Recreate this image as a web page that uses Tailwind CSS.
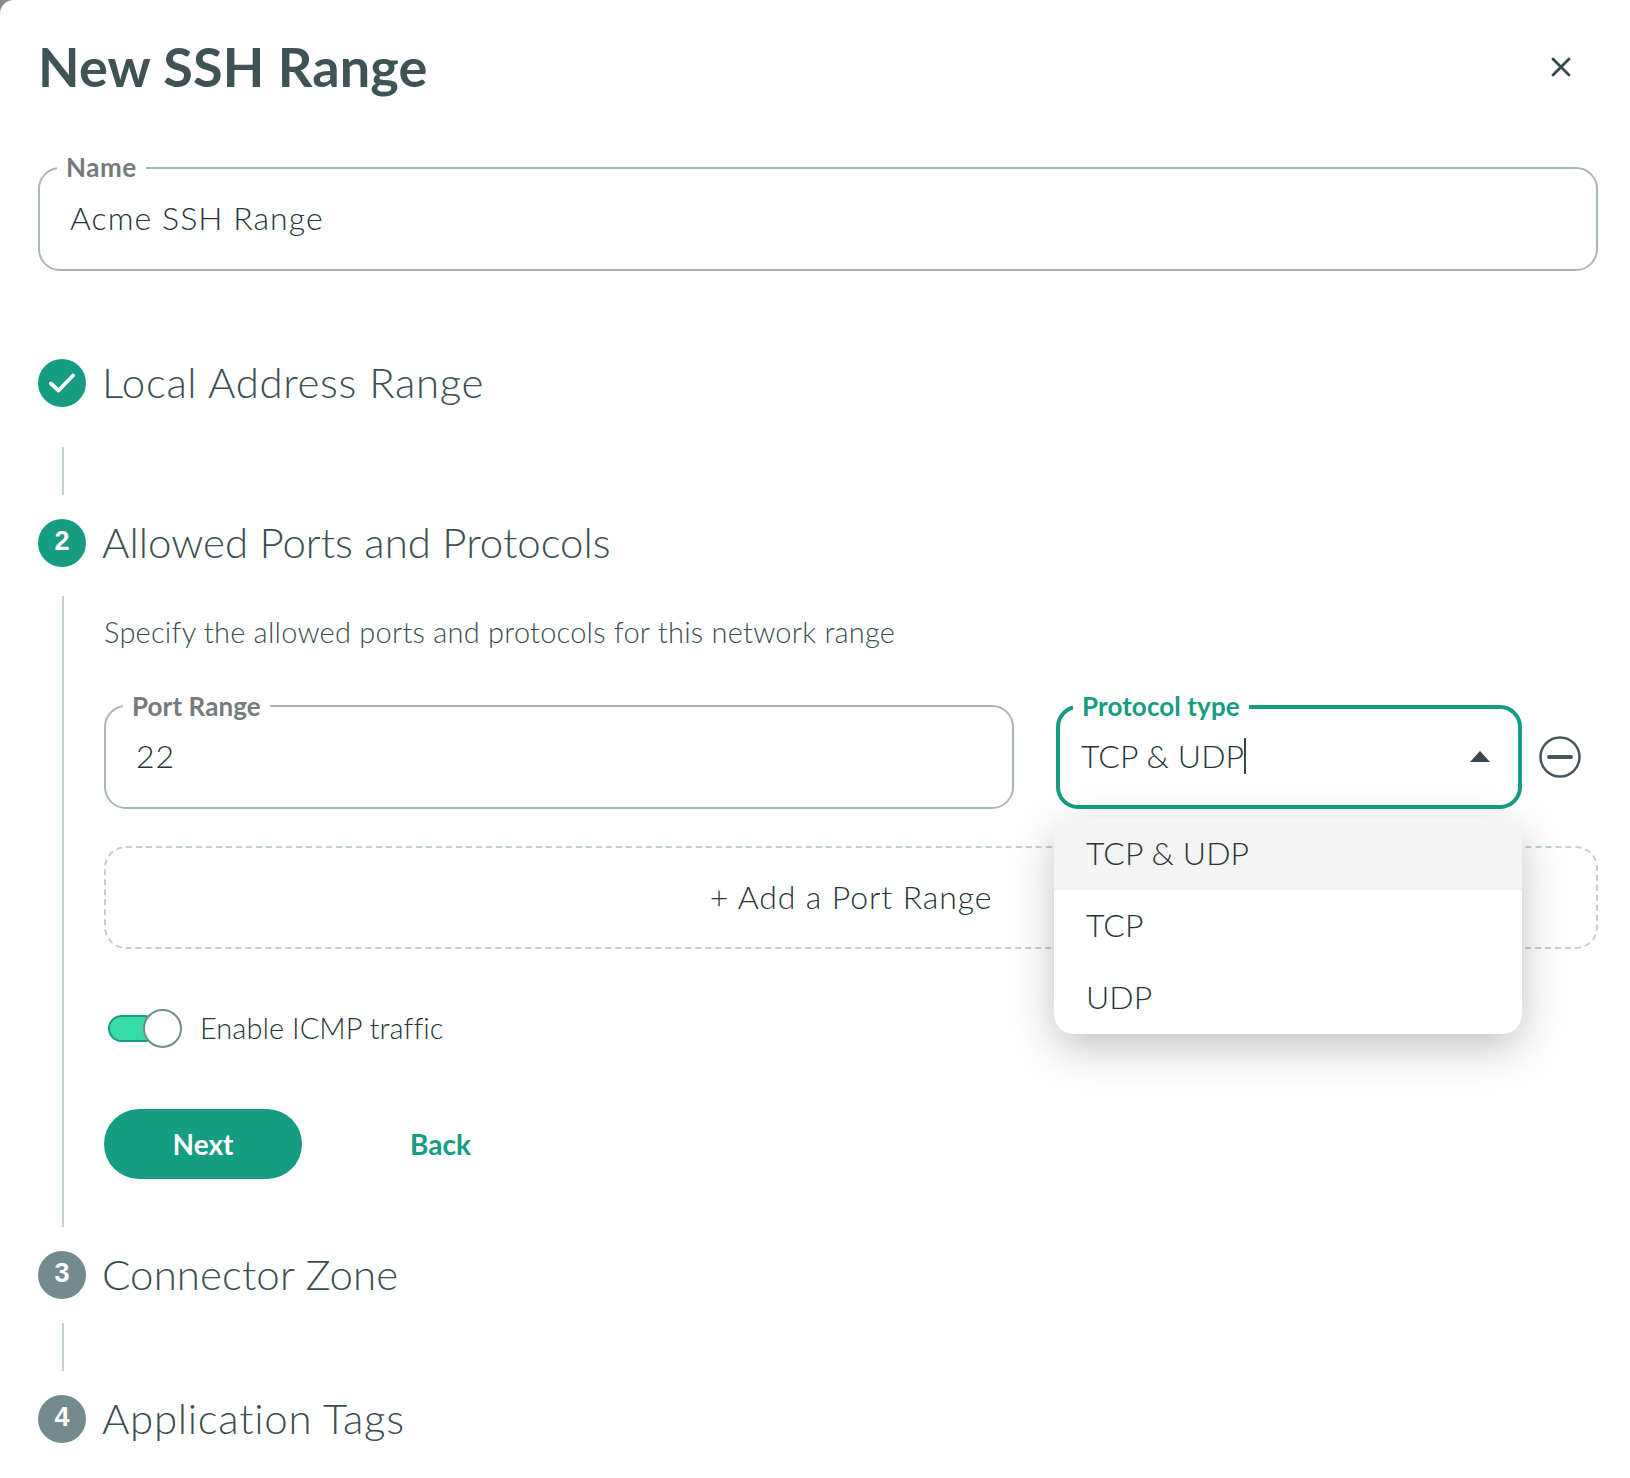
<!DOCTYPE html>
<html lang="en">
<head>
  <meta charset="UTF-8">
  <title>New SSH Range</title>
  <script src="https://cdn.jsdelivr.net/npm/@tailwindcss/browser@4"></script>
</head>
<body class="bg-[#8a8a8a] font-['Lato',sans-serif] text-[#44565a]">
  <div class="w-[1630px] h-[1478px] overflow-hidden bg-white rounded-tl-[14px] pl-[38px] pr-[32px] relative">

    <!-- Header -->
    <div class="flex items-center justify-between h-[133px]">
      <h1 class="text-[54px] font-bold tracking-[0.15px] text-[#3f5256] leading-none">New SSH Range</h1>
      <svg class="mr-[27px]" width="20" height="20" viewBox="0 0 20 20" fill="none" stroke="#37474b" stroke-width="2.8" stroke-linecap="round"><path d="M2 2l16 16M18 2L2 18"/></svg>
    </div>

    <!-- Name -->
    <div class="relative mt-[34px] h-[104px] border-2 border-[#a8b8b9] rounded-[22px] flex items-center pl-[30px]">
      <span class="absolute -top-[17px] left-[17px] bg-white px-[9px] text-[26px] tracking-[0.5px] leading-[30px] font-bold text-[#757a7b]">Name</span>
      <span class="text-[32px] font-light tracking-[1.05px] text-[#263538] pb-[2px]">Acme SSH Range</span>
    </div>

    <!-- Step 1 -->
    <div class="flex items-center gap-[16px] mt-[88px] h-[48px]">
      <div class="w-[48px] h-[48px] rounded-full bg-[#159c82] flex items-center justify-center">
        <svg width="26" height="20" viewBox="0 0 26 20" fill="none" stroke="#fff" stroke-width="3.800" stroke-linecap="round" stroke-linejoin="round"><path d="M2 10.500l7.500 7L24 2.500"/></svg>
      </div>
      <span class="text-[42px] font-light tracking-[0.65px] text-[#3c4e52] pb-[2px]">Local Address Range</span>
    </div>
    <div class="ml-[24px] mt-[40px] w-[2px] h-[48px] bg-[#c3ced0]"></div>

    <!-- Step 2 -->
    <div class="flex items-center gap-[16px] mt-[24px] h-[48px]">
      <div class="w-[48px] h-[48px] rounded-full bg-[#159c82] flex items-center justify-center text-white text-[27px] font-bold font-['Liberation_Sans',sans-serif] pb-[4px]">2</div>
      <span class="text-[42px] font-light text-[#3c4e52] pb-[2px]">Allowed Ports and Protocols</span>
    </div>

    <div class="ml-[24px] mt-[29px] h-[631px] border-l-2 border-[#c3ced0] pl-[40px]">
      <p class="pt-[18px] text-[29px] tracking-[0.23px] leading-[36px] font-light text-[#3c4e52]">Specify the allowed ports and protocols for this network range</p>

      <div class="flex items-start mt-[55px]">
        <div class="relative w-[910px] h-[104px] border-2 border-[#a8b8b9] rounded-[22px] flex items-center pl-[30px]">
          <span class="absolute -top-[16px] left-[17px] bg-white px-[9px] text-[26px] tracking-[0.1px] leading-[30px] font-bold text-[#757a7b]">Port Range</span>
          <span class="text-[32px] font-light tracking-[0.9px] text-[#263538] pb-[2px]">22</span>
        </div>
        <div class="relative ml-[42px] w-[466px] h-[104px] border-[4px] border-[#159c82] rounded-[22px] flex items-center pl-[21px]">
          <span class="absolute -top-[18px] left-[13px] bg-white px-[9px] text-[26px] tracking-[0.1px] leading-[30px] font-bold text-[#159c82]">Protocol type</span>
          <span class="text-[32px] font-light tracking-[0.1px] text-[#263538] border-r-2 border-[#37474b] leading-[36px] mb-[2px]">TCP &amp; UDP</span>
          <div class="absolute right-[28px] top-[42px] w-0 h-0 border-l-[10px] border-r-[10px] border-b-[11px] border-l-transparent border-r-transparent border-b-[#37474b]"></div>
        </div>
        <svg class="ml-[17px] mt-[31px]" width="42" height="42" viewBox="0 0 42 42" fill="none" stroke="#44565a"><circle cx="21" cy="21" r="19.500" stroke-width="2.500"/><path d="M10 21h22" stroke-width="4" stroke-linecap="round"/></svg>
      </div>

      <div class="flex items-center justify-center mt-[37px] w-[1494px] h-[103px] border-2 border-dashed border-[#c3ced0] rounded-[22px]">
        <span class="text-[32px] font-light tracking-[0.9px] text-[#263538] pb-[2px]">+ Add a Port Range</span>
      </div>

      <div class="flex items-center mt-[60px] h-[38px] pl-[4px]">
        <div class="relative w-[74px] h-[38px]">
          <div class="absolute left-0 top-[6px] w-[50px] h-[27px] rounded-full bg-[#37dba8] border-2 border-[#159c82]"></div>
          <div class="absolute right-0 top-0 w-[39px] h-[39px] rounded-full bg-white border-2 border-[#748a8e]"></div>
        </div>
        <span class="ml-[18px] text-[29px] tracking-[0.05px] font-light text-[#263538]">Enable ICMP traffic</span>
      </div>

      <div class="flex items-center mt-[62px]">
        <button class="w-[198px] h-[70px] rounded-full bg-[#159c82] text-white text-[28px] font-bold">Next</button>
        <button class="ml-[108px] text-[28px] font-bold text-[#159c82]">Back</button>
      </div>
    </div>

    <!-- Step 3 -->
    <div class="flex items-center gap-[16px] mt-[24px] h-[48px]">
      <div class="w-[48px] h-[48px] rounded-full bg-[#738a8e] flex items-center justify-center text-white text-[27px] font-bold font-['Liberation_Sans',sans-serif] pb-[4px]">3</div>
      <span class="text-[42px] font-light tracking-[0.1px] text-[#3c4e52] pb-[2px]">Connector Zone</span>
    </div>
    <div class="ml-[24px] mt-[24px] w-[2px] h-[48px] bg-[#c3ced0]"></div>

    <!-- Step 4 -->
    <div class="flex items-center gap-[16px] mt-[24px] h-[48px]">
      <div class="w-[48px] h-[48px] rounded-full bg-[#738a8e] flex items-center justify-center text-white text-[27px] font-bold font-['Liberation_Sans',sans-serif] pb-[4px]">4</div>
      <span class="text-[42px] font-light tracking-[0.7px] text-[#3c4e52] pb-[2px]">Application Tags</span>
    </div>

    <!-- Protocol dropdown menu -->
    <ul class="absolute left-[1054px] top-[818px] w-[468px] rounded-[20px] overflow-hidden bg-white shadow-[0_14px_44px_rgba(0,0,0,0.24)] text-[32px] font-light tracking-[0.1px] text-[#263538]">
      <li class="h-[72px] flex items-center pl-[32px] pb-[2px] bg-[#f4f4f4]">TCP &amp; UDP</li>
      <li class="h-[72px] flex items-center pl-[32px] pb-[2px]">TCP</li>
      <li class="h-[72px] flex items-center pl-[32px] pb-[2px]">UDP</li>
    </ul>
  </div>
</body>
</html>
